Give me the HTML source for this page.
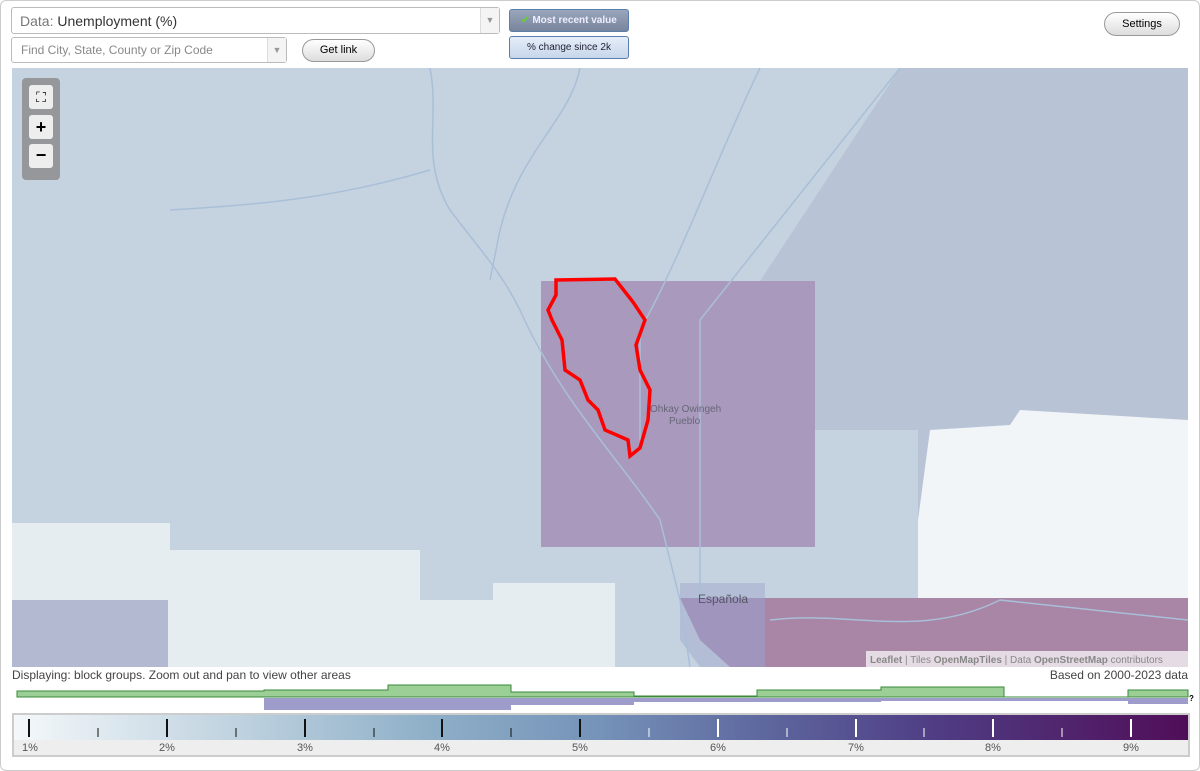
<!DOCTYPE html><html><head><meta charset="utf-8"><style>
body{margin:0;width:1200px;height:771px;background:#fff;font-family:"Liberation Sans",sans-serif;position:relative;overflow:hidden}
.frame{position:absolute;left:0;top:0;width:1198px;height:769px;border:1px solid #ccc;border-radius:6px}
.sel{position:absolute;background:#fff;border:1px solid #bbb;border-radius:3px;font-size:14px;color:#333;box-sizing:border-box}
.arr{position:absolute;right:0;top:0;bottom:0;width:18px;border-left:1px solid #ddd;background:#f4f4f4;color:#999;font-size:9px;text-align:center}
.btn{position:absolute;border:1px solid #999;border-radius:12px;background:linear-gradient(#fff,#ddd);font-size:11px;text-align:center;box-sizing:border-box}
.tg{position:absolute;border:1px solid #5a7fae;border-radius:3px;font-size:10px;text-align:center;box-sizing:border-box}
.lbl{position:absolute;font-size:12px;color:#444}
</style></head><body>
<div class="frame"></div>
<div class="sel" style="left:11px;top:7px;width:489px;height:27px;padding:5px 8px"><span style="color:#777">Data:</span> Unemployment (%)<div class="arr" style="line-height:25px">▼</div></div>
<div class="sel" style="left:11px;top:37px;width:276px;height:26px;padding:5px 9px;font-size:12px;color:#888">Find City, State, County or Zip Code<div class="arr" style="line-height:24px">▼</div></div>
<div class="btn" style="left:302px;top:39px;width:73px;height:23px;line-height:21px">Get link</div>
<div class="tg" style="left:509px;top:9px;width:120px;height:23px;line-height:21px;background:linear-gradient(#9aa6bb,#78849c);color:#eef;font-weight:bold"><span style="color:#6c3">✔</span> Most recent value</div>
<div class="tg" style="left:509px;top:36px;width:120px;height:23px;line-height:21px;background:linear-gradient(#e6eef8,#c6d6ea);color:#223">% change since 2k</div>
<div class="btn" style="left:1104px;top:12px;width:76px;height:24px;line-height:22px">Settings</div>
<svg style="position:absolute;left:12px;top:68px" width="1176" height="599" viewBox="12 68 1176 599">
<rect x="12" y="68" width="1176" height="599" fill="#c5d3e1"/>
<polygon points="900,68 1188,68 1188,598 918,598 918,430 815,430 815,281 760,281" fill="#b8c3d6"/>
<polygon points="12,523 170,523 170,550 420,550 420,600 493,600 493,583 615,583 615,667 12,667" fill="#e6edf1"/>
<polygon points="930,430 1010,425 1020,410 1188,420 1188,598 918,598 918,520" fill="#f1f5f8"/>
<polygon points="680,583 765,583 765,667 700,667 680,640" fill="#b4bdd6"/>
<rect x="12" y="600" width="156" height="67" fill="#b3b9d1"/>
<rect x="541" y="281" width="274" height="266" fill="#a99abd"/>
<rect x="765" y="598" width="423" height="69" fill="#a985a6"/>
<polygon points="680,598 765,598 765,667 730,667 700,640" fill="#9f95bd"/>
<g fill="none" stroke="#a9bfd8" stroke-width="1.5">
<path d="M430,68 C440,120 420,160 450,210 C480,250 500,270 520,310 C560,400 620,460 660,520 L680,600 L690,667"/>
<path d="M580,68 C570,120 520,150 500,230 L490,280"/>
<path d="M760,68 C720,150 680,260 640,330 L640,440"/>
<path d="M170,210 C250,205 330,200 430,170"/>
<path d="M900,68 L700,320 L700,600"/>
<path d="M770,620 C850,610 920,640 1000,600 L1188,620"/>
</g>
<path d="M556,280 L615,279 L633,302 L645,320 L636,345 L640,370 L650,390 L648,420 L640,448 L630,456 L628,440 L605,430 L598,410 L588,400 L580,380 L565,370 L562,340 L552,320 L548,310 L556,295 Z" fill="none" stroke="#f00" stroke-width="3.5"/>
<text x="650" y="412" font-size="10" fill="#667" font-family="Liberation Sans">Ohkay Owingeh</text>
<text x="669" y="424" font-size="10" fill="#667" font-family="Liberation Sans">Pueblo</text>
<text x="698" y="603" font-size="12" fill="#556" font-family="Liberation Sans">Española</text>
<rect x="866" y="651" width="322" height="16" fill="#fff" opacity=".7"/>
<text x="870" y="663" font-size="10" fill="#888" font-family="Liberation Sans"><tspan font-weight="bold">Leaflet</tspan> | Tiles <tspan font-weight="bold">OpenMapTiles</tspan> | Data <tspan font-weight="bold">OpenStreetMap</tspan> contributors</text>
</svg>
<div style="position:absolute;left:22px;top:78px;width:38px;height:102px;background:#888;border-radius:4px;opacity:.8"></div>
<div style="position:absolute;left:29px;top:85px;width:24px;height:24px;background:#eee;border-radius:3px;text-align:center;line-height:24px;font-size:14px">⛶</div>
<div style="position:absolute;left:29px;top:115px;width:24px;height:24px;background:#eee;border-radius:3px;text-align:center;line-height:24px;font-size:18px;font-weight:bold">+</div>
<div style="position:absolute;left:29px;top:144px;width:24px;height:24px;background:#eee;border-radius:3px;text-align:center;line-height:22px;font-size:18px;font-weight:bold">−</div>
<div class="lbl" style="left:12px;top:668px">Displaying: block groups. Zoom out and pan to view other areas</div>
<div class="lbl" style="right:12px;top:668px">Based on 2000-2023 data</div>
<svg style="position:absolute;left:0;top:680px" width="1200" height="35">
<path d="M17,17 L17,11 L264,11 L264,10 L388,10 L388,5 L511,5 L511,12 L634,12 L634,16 L757,16 L757,10 L881,10 L881,7 L1004,7 L1004,17 L1128,17 L1128,10 L1188,10 L1188,17 Z" fill="#9ccf95" stroke="#3a8a3a"/>
<path d="M17,18 H264 V30 H511 V25 H634 V22 H881 V21 H1128 V24 H1188 V18 Z" fill="#9e9ccb"/>
<text x="1189" y="21" font-size="8" font-weight="bold">?</text>
</svg>
<div style="position:absolute;left:12px;top:713px;width:1178px;height:44px;border:2px solid #ccc;box-sizing:border-box;background:#eee">
<div style="height:25px;background:linear-gradient(90deg,#f4f8fa,#bcd0de 20%,#8fb0c8 35%,#7592b8 50%,#5f6aa0 63%,#4f3e85 78%,#500e58)"></div>
</div>
<svg style="position:absolute;left:12px;top:713px" width="1178" height="44">
<g stroke-width="2">
<path d="M17,6V24M155,6V24M293,6V24M430,6V24M568,6V24" stroke="#111"/>
<path d="M706,6V24M844,6V24M981,6V24M1119,6V24" stroke="#fff"/>
</g>
<g stroke-width="1">
<path d="M86,15V24M224,15V24M362,15V24M499,15V24" stroke="#111"/>
<path d="M637,15V24M775,15V24M912,15V24M1050,15V24" stroke="#fff"/>
</g>
<g font-size="11" fill="#555" font-family="Liberation Sans">
<text x="10" y="38">1%</text><text x="147" y="38">2%</text><text x="285" y="38">3%</text><text x="422" y="38">4%</text><text x="560" y="38">5%</text><text x="698" y="38">6%</text><text x="836" y="38">7%</text><text x="973" y="38">8%</text><text x="1111" y="38">9%</text>
</g></svg>
</body></html>
